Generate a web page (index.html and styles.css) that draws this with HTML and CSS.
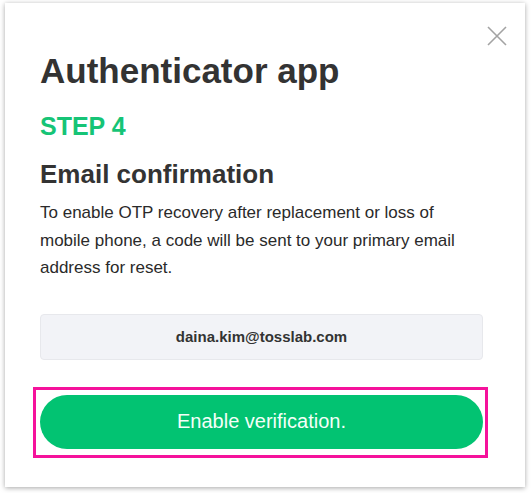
FILE: index.html
```html
<!DOCTYPE html>
<html lang="en">
<head>
<meta charset="utf-8">
<title>Authenticator app</title>
<link rel="stylesheet" href="styles.css">
</head>
<body>
<div class="page">
  <div class="modal">
    <button class="close" aria-label="Close">
      <svg width="20" height="20" viewBox="0 0 20 20"><path d="M1 1 L19 19 M19 1 L1 19" stroke="#a3a3a3" stroke-width="1.6" fill="none"/></svg>
    </button>
    <h1 class="title">Authenticator app</h1>
    <div class="step">STEP 4</div>
    <h2 class="subtitle">Email confirmation</h2>
    <p class="desc">To enable OTP recovery after replacement or loss of mobile phone, a code will be sent to your primary email address for reset.</p>
    <div class="email">daina.kim@tosslab.com</div>
    <div class="highlight">
      <button class="primary">Enable verification.</button>
    </div>
  </div>
</div>
</body>
</html>
```
FILE: styles.css
```css
html, body {
  margin: 0;
  padding: 0;
  background: #ffffff;
}
body {
  font-family: "Liberation Sans", Arial, sans-serif;
  color: #333333;
}
.page {
  padding: 3px 7px 6px 5px;
}
.modal {
  position: relative;
  width: 520px;
  box-sizing: border-box;
  padding: 48px 42px 29px 35px;
  background: #ffffff;
  box-shadow: 0 1px 5px rgba(0, 0, 0, 0.35);
  display: flex;
  flex-direction: column;
}
.close {
  position: absolute;
  top: 23px;
  right: 18px;
  width: 20px;
  height: 20px;
  padding: 0;
  border: 0;
  background: none;
  display: flex;
}
.title {
  margin: 0;
  font-size: 35px;
  line-height: 40px;
  font-weight: bold;
  color: #333333;
}
.step {
  margin-top: 20px;
  font-size: 25px;
  line-height: 30px;
  font-weight: bold;
  color: #16c476;
}
.subtitle {
  margin: 18px 0 0;
  font-size: 26px;
  line-height: 30px;
  font-weight: bold;
  color: #333333;
}
.desc {
  margin: 10px 0 0;
  font-size: 17px;
  line-height: 27.5px;
  color: #2a2a2a;
}
.email {
  margin-top: 32px;
  height: 46px;
  box-sizing: border-box;
  border: 1px solid #e7e8ec;
  border-radius: 4px;
  background: #f2f3f7;
  display: flex;
  align-items: center;
  justify-content: center;
  font-size: 15px;
  font-weight: bold;
  color: #333333;
}
.highlight {
  margin: 27px -5px 0 -7px;
  padding: 5px 2px 6px 4px;
  border: 3px solid #f5129b;
  display: flex;
}
.primary {
  flex: 1;
  height: 54px;
  border: 0;
  border-radius: 27px;
  background: #02c372;
  color: #f4fff8;
  font-family: "Liberation Sans", Arial, sans-serif;
  font-size: 20px;
  padding: 0;
}
```
